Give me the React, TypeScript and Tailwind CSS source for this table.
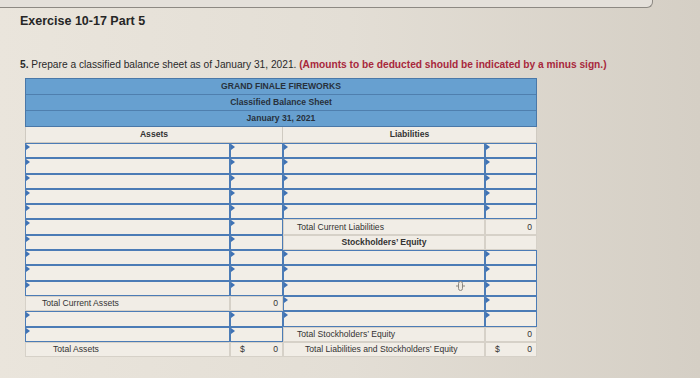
import React from "react";

type Row =
  | { kind: "input" }
  | { kind: "total"; label: string; pad: string; amount: string; dollar?: boolean }
  | { kind: "heading"; label: string };

const left: Row[] = [
  ...Array.from({ length: 10 }, () => ({ kind: "input" as const })),
  { kind: "total", label: "Total Current Assets", pad: "pl-[16px]", amount: "0" },
  { kind: "input" },
  { kind: "input" },
  { kind: "total", label: "Total Assets", pad: "pl-[27px]", amount: "0", dollar: true },
];

const right: Row[] = [
  ...Array.from({ length: 5 }, () => ({ kind: "input" as const })),
  { kind: "total", label: "Total Current Liabilities", pad: "pl-[13px]", amount: "0" },
  { kind: "heading", label: "Stockholders\u2019 Equity" },
  ...Array.from({ length: 5 }, () => ({ kind: "input" as const })),
  { kind: "total", label: "Total Stockholders\u2019 Equity", pad: "pl-[13px]", amount: "0" },
  {
    kind: "total",
    label: "Total Liabilities and Stockholders\u2019 Equity",
    pad: "pl-[21px]",
    amount: "0",
    dollar: true,
  },
];

function Marker() {
  return (
    <span className="absolute left-0 top-0 h-0 w-0 border-y-[3px] border-l-[4px] border-y-transparent border-l-[#3f72b4]" />
  );
}

function InputCell() {
  return (
    <div className="relative border border-[#4c7cb6] bg-[#f2eee7]">
      <Marker />
    </div>
  );
}

function PlainCell({ children, className = "" }: { children?: React.ReactNode; className?: string }) {
  return (
    <div className={`flex items-center border border-[#d6d1c8] bg-[#f1ede6] ${className}`}>
      {children}
    </div>
  );
}

function Cells({ row }: { row: Row }) {
  if (row.kind === "input")
    return (
      <>
        <InputCell />
        <InputCell />
      </>
    );
  if (row.kind === "heading")
    return (
      <>
        <PlainCell className="justify-center font-bold">{row.label}</PlainCell>
        <PlainCell />
      </>
    );
  return (
    <>
      <PlainCell className={row.pad}>{row.label}</PlainCell>
      <PlainCell className="justify-between pl-[9px] pr-[4px]">
        <span>{row.dollar ? "$" : ""}</span>
        <span>{row.amount}</span>
      </PlainCell>
    </>
  );
}

export default function App() {
  return (
    <div
      className="h-[378px] w-[700px] overflow-hidden bg-gradient-to-r from-[#eae5dc] via-[#e3ded5] to-[#d5cfc5] text-[#2b2b2b]"
      style={{ fontFamily: "'Liberation Sans', Arial, sans-serif" }}
    >
      <div className="h-[8px] w-[653px] rounded-br-[6px] border-b border-r border-[#8d8983] bg-[#e4e0da]" />

      <h1 className="ml-[20px] mt-[6px] text-[12.5px] font-bold leading-[14px] text-[#262626]">
        Exercise 10-17 Part 5
      </h1>

      <p className="ml-[20px] mt-[31px] whitespace-nowrap text-[10.2px] leading-[12px] text-[#2a2a2a]">
        <span className="font-bold">5.</span> Prepare a classified balance sheet as of January 31, 2021.{" "}
        <span className="font-bold text-[#a8283c]">
          (Amounts to be deducted should be indicated by a minus sign.)
        </span>
      </p>

      <div className="ml-[25px] mt-[7px] w-[512px] text-[8.6px] leading-none text-[#333]">
        <div className="border border-[#4a78a8] bg-[#67a0d0] font-bold text-[#27313c]">
          <div className="flex h-[16px] items-center justify-center border-b border-[#4f7fae]">
            GRAND FINALE FIREWORKS
          </div>
          <div className="flex h-[16px] items-center justify-center border-b border-[#4f7fae]">
            Classified Balance Sheet
          </div>
          <div className="flex h-[15px] items-center justify-center">January 31, 2021</div>
        </div>

        <div className="grid grid-cols-[258px_254px] font-bold">
          <div className="flex h-[16px] items-center justify-center border-x border-b border-[#cfcac1] bg-[#f1ede6]">
            Assets
          </div>
          <div className="flex h-[16px] items-center justify-center border-b border-r border-[#cfcac1] bg-[#f1ede6]">
            Liabilities
          </div>
        </div>

        <div className="relative grid grid-cols-[205px_53px_202px_52px] auto-rows-[15.3px]">
          {left.map((l, i) => (
            <React.Fragment key={i}>
              <Cells row={l} />
              <Cells row={right[i]} />
            </React.Fragment>
          ))}
          <svg
            className="absolute left-[431px] top-[138px]"
            width="9"
            height="10"
            viewBox="0 0 9 10"
          >
            <rect x="2.5" y="0.5" width="4" height="9" rx="2" fill="#eee9e1" stroke="#8a8780" />
            <line x1="0" y1="5" x2="2.5" y2="5" stroke="#8a8780" />
            <line x1="6.5" y1="5" x2="9" y2="5" stroke="#8a8780" />
          </svg>
        </div>
      </div>
    </div>
  );
}
